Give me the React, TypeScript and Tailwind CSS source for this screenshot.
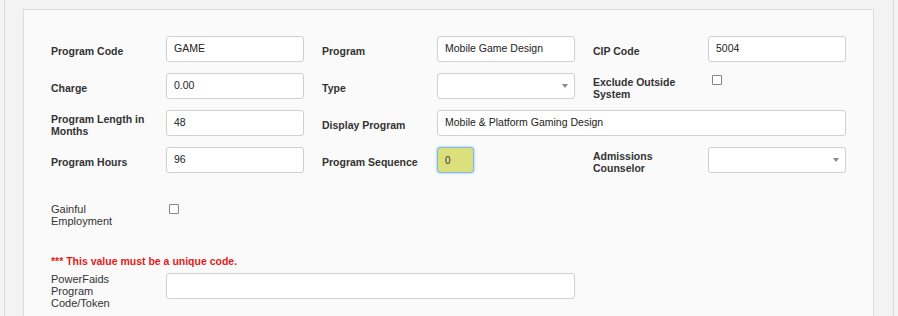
const Label = ({ children, className = "" }: { children: React.ReactNode; className?: string }) => (
  <div className={`w-[115px] shrink-0 pt-[3px] text-[10.5px] font-bold leading-[12px] text-[#333] ${className}`}>
    {children}
  </div>
);

const TextBox = ({ value = "", width = "w-[138px]" }: { value?: string; width?: string }) => (
  <div
    className={`${width} h-[26px] shrink-0 rounded-[3px] border border-[#d0d0d0] bg-white px-[7px] flex items-center text-[10.5px] text-[#222]`}
  >
    {value}
  </div>
);

const Select = () => (
  <div className="w-[138px] h-[26px] shrink-0 rounded-[3px] border border-[#d0d0d0] bg-white flex items-center justify-end pr-[6px]">
    <span className="block w-0 h-0 border-l-[3.5px] border-r-[3.5px] border-t-[4px] border-l-transparent border-r-transparent border-t-[#888]" />
  </div>
);

const Check = ({ className = "" }: { className?: string }) => (
  <span className={`block w-[10px] h-[10px] border border-[#858585] rounded-[1px] bg-white ${className}`} />
);

export default function App() {
  return (
    <div
      className="w-[898px] h-[316px] overflow-hidden bg-[#f3f3f3]"
      style={{ fontFamily: '"Liberation Sans", Arial, sans-serif' }}
    >
      <div className="ml-[4px] w-[890px] h-full border-l border-r border-[#dcdcdc] pl-[18px] pt-[9px]">
        <div className="w-[851px] h-[400px] border border-[#dcdcdc] bg-[#fafafa] pl-[27px] pt-[26px]">
          <div className="flex flex-col gap-[11px]">
            <div className="flex items-center h-[26px]">
              <Label>Program Code</Label>
              <TextBox value="GAME" />
              <Label className="ml-[18px]">Program</Label>
              <TextBox value="Mobile Game Design" />
              <Label className="ml-[18px]">CIP Code</Label>
              <TextBox value="5004" />
            </div>
            <div className="flex items-center h-[26px]">
              <Label>Charge</Label>
              <TextBox value="0.00" />
              <Label className="ml-[18px]">Type</Label>
              <Select />
              <Label className="ml-[18px] pt-[4px]">
                Exclude Outside
                <br />
                System
              </Label>
              <div className="w-[138px] h-[26px] pl-[4px] pt-[2px]">
                <Check />
              </div>
            </div>
            <div className="flex items-center h-[26px]">
              <Label>
                Program Length in
                <br />
                Months
              </Label>
              <TextBox value="48" />
              <Label className="ml-[18px]">Display Program</Label>
              <TextBox value="Mobile & Platform Gaming Design" width="w-[409px]" />
            </div>
            <div className="flex items-center h-[26px]">
              <Label>Program Hours</Label>
              <TextBox value="96" />
              <Label className="ml-[18px]">Program Sequence</Label>
              <div className="w-[138px] shrink-0">
                <div className="w-[37px] h-[26px] rounded-[3px] border border-[#7fb6e6] bg-[#dbe07d] shadow-[0_0_3px_#8cc0ee] flex items-center pl-[7px] text-[10px] text-[#333]">
                  0
                </div>
              </div>
              <Label className="ml-[18px]">
                Admissions
                <br />
                Counselor
              </Label>
              <Select />
            </div>
          </div>

          <div className="flex mt-[30px]">
            <div className="w-[115px] shrink-0 text-[11px] leading-[12px] text-[#333]">
              Gainful
              <br />
              Employment
            </div>
            <div className="pl-[3px] pt-[1px]">
              <Check />
            </div>
          </div>

          <div className="mt-[28px] text-[10.5px] font-bold leading-[12px] text-[#e31b1b]">
            *** This value must be a unique code.
          </div>

          <div className="flex mt-[6px]">
            <div className="w-[115px] shrink-0 text-[11px] leading-[12px] text-[#333]">
              PowerFaids
              <br />
              Program
              <br />
              Code/Token
            </div>
            <TextBox width="w-[409px]" />
          </div>
        </div>
      </div>
    </div>
  );
}
